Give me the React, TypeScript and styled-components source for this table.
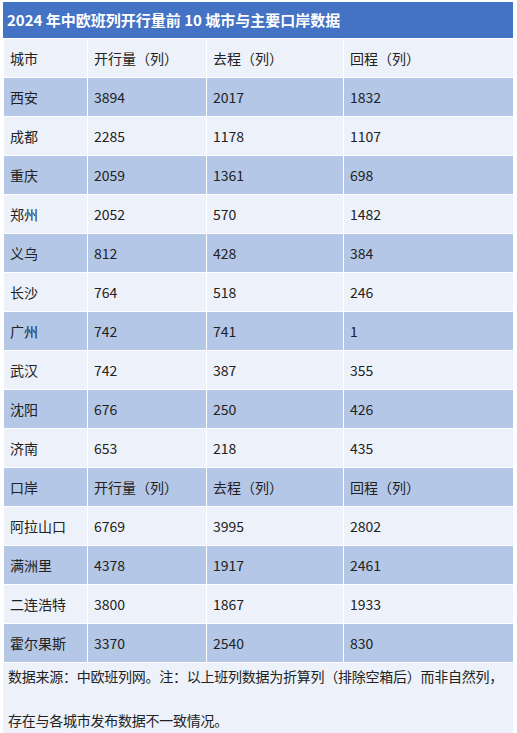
import React from 'react';
import styled, { createGlobalStyle } from 'styled-components';

const GlobalStyle = createGlobalStyle`
  body {
    margin: 0;
    background: #ffffff;
    font-family: "Noto Sans CJK SC", "Noto Sans", sans-serif;
  }
`;

const Wrapper = styled.div`
  padding: 2px 4px 0 3px;
`;

const Title = styled.div`
  background: #4472c4;
  color: #ffffff;
  font-weight: bold;
  font-size: 15px;
  height: 36px;
  line-height: 36px;
  padding-left: 4px;
`;

const Table = styled.table`
  width: 100%;
  border-collapse: collapse;
  table-layout: fixed;
  font-size: 14px;
  color: #222;
`;

const Row = styled.tr<{ dark: boolean }>`
  background: ${props => (props.dark ? '#b4c7e7' : '#edf1f9')};
`;

const Cell = styled.td`
  height: 38px;
  padding: 0 0 0 6px;
  border: 1px solid #ffffff;
`;

const Footer = styled.div`
  background: #edf1f9;
  color: #222;
  font-size: 14px;
  padding: 2px 0 0 5px;
  height: 72px;
  white-space: nowrap;
  letter-spacing: -0.25px;
`;

const FooterLine = styled.div`
  height: 44px;
  line-height: 22px;
`;

const rows: string[][] = [
  ['城市', '开行量（列）', '去程（列）', '回程（列）'],
  ['西安', '3894', '2017', '1832'],
  ['成都', '2285', '1178', '1107'],
  ['重庆', '2059', '1361', '698'],
  ['郑州', '2052', '570', '1482'],
  ['义乌', '812', '428', '384'],
  ['长沙', '764', '518', '246'],
  ['广州', '742', '741', '1'],
  ['武汉', '742', '387', '355'],
  ['沈阳', '676', '250', '426'],
  ['济南', '653', '218', '435'],
  ['口岸', '开行量（列）', '去程（列）', '回程（列）'],
  ['阿拉山口', '6769', '3995', '2802'],
  ['满洲里', '4378', '1917', '2461'],
  ['二连浩特', '3800', '1867', '1933'],
  ['霍尔果斯', '3370', '2540', '830'],
];

const widths = [84, 119, 137, 170];

const App: React.FC = () => (
  <Wrapper>
    <GlobalStyle />
    <Title>2024 年中欧班列开行量前 10 城市与主要口岸数据</Title>
    <Table>
      <colgroup>
        {widths.map((w, i) => (
          <col key={i} style={{ width: w }} />
        ))}
      </colgroup>
      <tbody>
        {rows.map((r, i) => (
          <Row key={i} dark={i % 2 === 1}>
            {r.map((c, j) => (
              <Cell key={j}>{c}</Cell>
            ))}
          </Row>
        ))}
      </tbody>
    </Table>
    <Footer>
      <FooterLine>数据来源：中欧班列网。注：以上班列数据为折算列（排除空箱后）而非自然列，</FooterLine>
      <FooterLine>存在与各城市发布数据不一致情况。</FooterLine>
    </Footer>
  </Wrapper>
);

export default App;
